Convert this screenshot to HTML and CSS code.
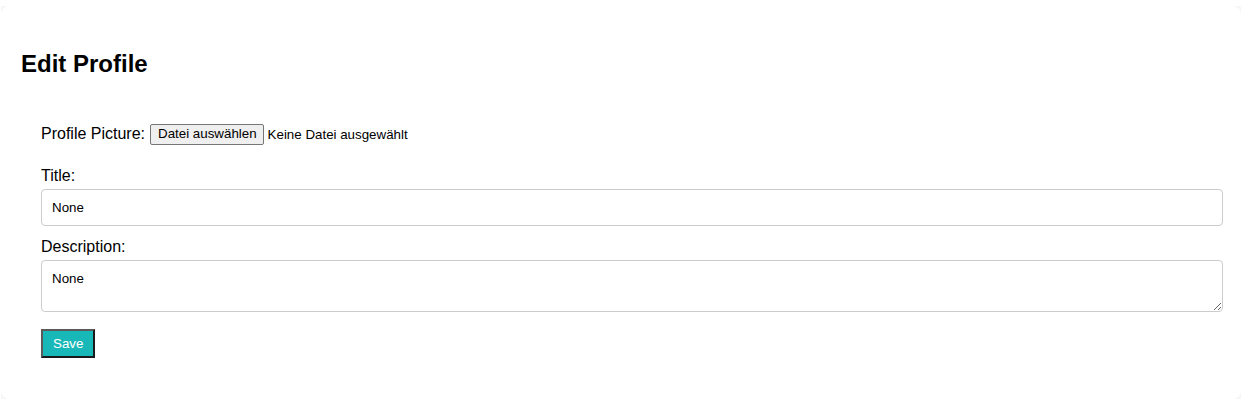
FILE: index.html
```html
<!DOCTYPE html>
<html lang="de">
<head>
<meta charset="utf-8">
<title>Edit Profile</title>
<link rel="stylesheet" href="styles.css">
</head>
<body>
<div class="card">
  <h2 class="title">Edit Profile</h2>
  <form class="form">
    <div class="file-row">
      <label class="label-inline">Profile Picture:</label>
      <span class="file-btn">Datei auswählen</span>
      <span class="file-name">Keine Datei ausgewählt</span>
    </div>
    <div class="group">
      <label class="label">Title:</label>
      <input class="field" type="text" value="None">
    </div>
    <div class="group">
      <label class="label">Description:</label>
      <textarea class="field area" rows="2">None</textarea>
    </div>
    <div class="actions">
      <button class="save" type="button">Save</button>
    </div>
  </form>
</div>
</body>
</html>
```
FILE: styles.css
```css
html, body {
  background: #ffffff;
}
body {
  margin: 6px 10px 10px 1px;
  font-family: "Liberation Sans", Arial, sans-serif;
  color: #000;
}
.card {
  background: #fff;
  border-radius: 8px;
  box-shadow: 0 0 10px rgba(0, 0, 0, 0.12);
  padding: 20px 20px 21px;
}
.title {
  font-size: 24px;
  font-weight: bold;
  margin: 24px 0 20px;
  line-height: normal;
}
.form {
  padding: 21px 20px 20px;
  display: flex;
  flex-direction: column;
}
.file-row {
  display: flex;
  align-items: center;
  height: 22px;
  margin-top: 4px;
  font-size: 16px;
}
.label-inline {
  margin-right: 5px;
}
.file-btn {
  font-size: 13.333px;
  background: #efefef;
  border: 1px solid #767676;
  border-radius: 2px;
  padding: 1px 6px 1px 7px;
  line-height: 16px;
  height: 17px;
  margin-right: 4px;
}
.file-name {
  font-size: 13.333px;
}
.group {
  display: flex;
  flex-direction: column;
  margin-top: 22px;
}
.group + .group {
  margin-top: 12px;
}
.label {
  font-size: 16px;
  line-height: 18px;
  margin-bottom: 4px;
}
.field {
  box-sizing: content-box;
  width: 100%;
  padding: 10px;
  border: 1px solid #ccc;
  border-radius: 4px;
  font-family: "Liberation Sans", Arial, sans-serif;
  font-size: 13.333px;
  margin: 0;
  color: #000;
  background: #fff;
}
.area {
  resize: vertical;
  display: block;
}
.actions {
  margin-top: 17px;
}
.save {
  background: #19b8b8;
  color: #fff;
  font-family: "Liberation Sans", Arial, sans-serif;
  font-size: 13.333px;
  padding: 5px 10px;
  border-width: 2px;
  border-style: solid;
  border-color: #5a5a5a #1a1a1a #1a1a1a #5a5a5a;
  margin: 0;
}
```
